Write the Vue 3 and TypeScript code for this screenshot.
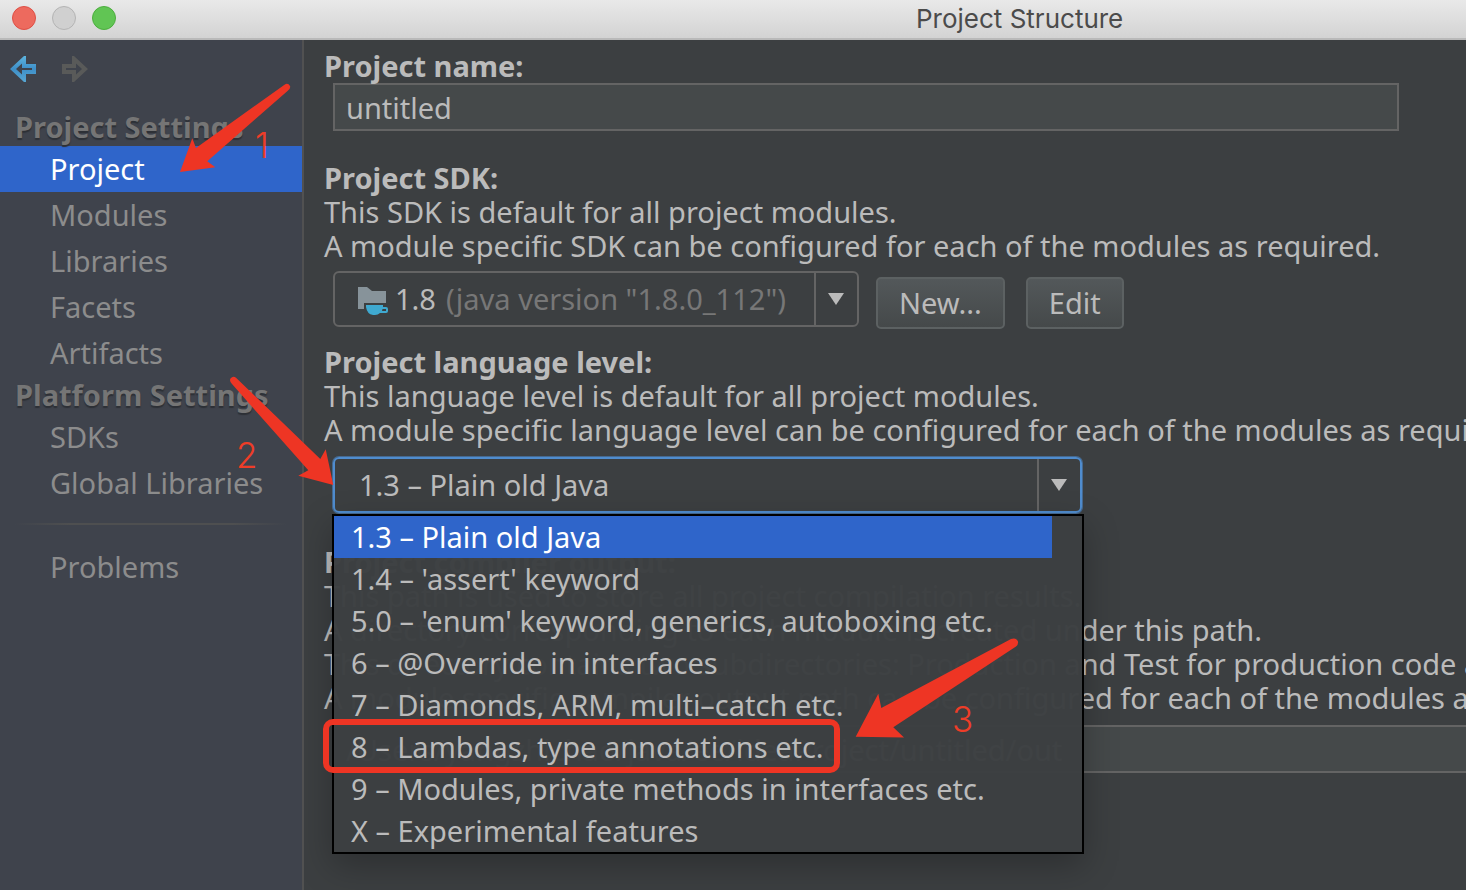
<script setup lang="ts">
import { ref } from 'vue'

interface NavGroup {
  title: string
  items: string[]
}

const groups: NavGroup[] = [
  { title: 'Project Settings', items: ['Project', 'Modules', 'Libraries', 'Facets', 'Artifacts'] },
  { title: 'Platform Settings', items: ['SDKs', 'Global Libraries'] },
]

const levels: string[] = [
  '1.3 – Plain old Java',
  "1.4 – 'assert' keyword",
  "5.0 – 'enum' keyword, generics, autoboxing etc.",
  '6 – @Override in interfaces',
  '7 – Diamonds, ARM, multi–catch etc.',
  '8 – Lambdas, type annotations etc.',
  '9 – Modules, private methods in interfaces etc.',
  'X – Experimental features',
]

const page = ref('Project')
const projectName = ref('untitled')
const sdk = ref('1.8')
const level = ref(levels[0])
const outputPath = ref('/Users/yangzhichao/java/ee/ideaProject/untitled/out')
</script>

<template>
  <div class="window">
    <header class="titlebar">
      <div class="lights">
        <button class="light close" type="button" aria-label="Close"></button>
        <button class="light minimize" type="button" aria-label="Minimize"></button>
        <button class="light zoom" type="button" aria-label="Zoom"></button>
      </div>
      <h1 class="title">Project Structure</h1>
    </header>

    <div class="body">
      <aside class="sidebar">
        <div class="history">
          <button class="history-button" type="button" aria-label="Back">
            <svg width="26" height="26" viewBox="0 0 26 26">
              <defs>
                <linearGradient id="back-fill" x1="0" y1="0" x2="0" y2="1">
                  <stop offset="0" stop-color="#5db4de" />
                  <stop offset="0.5" stop-color="#3e8fc8" />
                  <stop offset="1" stop-color="#57a6d2" />
                </linearGradient>
              </defs>
              <path
                fill="url(#back-fill)"
                fill-rule="evenodd"
                d="M0 13 L14 0 H16 V8 H26 V18 H16 V26 H14 Z M6 13 L12 7.5 V12 H22 V14 H12 V18.5 Z"
              />
            </svg>
          </button>
          <button class="history-button" type="button" aria-label="Forward">
            <svg width="26" height="26" viewBox="0 0 26 26">
              <path
                fill="#595a59"
                fill-rule="evenodd"
                d="M26 13 L12 0 H10 V8 H0 V18 H10 V26 H12 Z M20 13 L14 7.5 V12 H4 V14 H14 V18.5 Z"
              />
            </svg>
          </button>
        </div>

        <nav>
          <section v-for="group in groups" :key="group.title">
            <h2 class="group-title">{{ group.title }}</h2>
            <a
              v-for="item in group.items"
              :key="item"
              href="#"
              class="nav-item"
              :class="{ selected: item === page }"
              @click.prevent="page = item"
            >{{ item }}</a>
          </section>
          <hr class="separator" />
          <a href="#" class="nav-item" @click.prevent="page = 'Problems'">Problems</a>
        </nav>
      </aside>

      <main class="content">
        <section class="block">
          <label class="heading" for="project-name">Project name:</label>
          <input id="project-name" v-model="projectName" class="field name-field" type="text" />
        </section>

        <section class="block sdk-block">
          <label class="heading" for="sdk">Project SDK:</label>
          <p>This SDK is default for all project modules.</p>
          <p>A module specific SDK can be configured for each of the modules as required.</p>
          <div class="sdk-row">
            <div class="combo sdk-combo">
              <svg class="sdk-icon" width="32" height="30" viewBox="0 0 32 30">
                <path fill="#87939a" d="M0 1 H9 L14 5 H28 V17 H6 V23 H0 Z" />
                <path
                  fill="#3fa9d0"
                  d="M8 19 H25 V21 H28 Q30 21 30 23 V25 Q30 27 28 27 H22 Q20 29 17 29 H15 Q9 28 8 21 Z M24.500 23 L24 25 H28 V23 Z"
                  fill-rule="evenodd"
                />
              </svg>
              <select id="sdk" v-model="sdk" class="sdk-select">
                <option>1.8</option>
              </select>
              <span class="sdk-version">(java version "1.8.0_112")</span>
              <span class="combo-arrow">
                <svg width="16" height="12" viewBox="0 0 16 12"><path fill="#bbbbbb" d="M0 0 H16 L8 12 Z" /></svg>
              </span>
            </div>
            <button class="push" type="button">New...</button>
            <button class="push edit" type="button">Edit</button>
          </div>
        </section>

        <section class="block level-block">
          <label class="heading" for="level">Project language level:</label>
          <p>This language level is default for all project modules.</p>
          <p>A module specific language level can be configured for each of the modules as required.</p>
          <div class="combo level-combo">
            <select id="level" v-model="level" class="level-select">
              <option v-for="item in levels" :key="item">{{ item }}</option>
            </select>
            <span class="combo-arrow">
              <svg width="16" height="12" viewBox="0 0 16 12"><path fill="#bbbbbb" d="M0 0 H16 L8 12 Z" /></svg>
            </span>
            <ul class="popup" role="listbox" aria-label="Project language level">
              <li
                v-for="item in levels"
                :key="item"
                role="option"
                class="popup-item"
                :class="{ active: item === level }"
                :aria-selected="item === level"
                @click="level = item"
              >{{ item }}</li>
            </ul>
          </div>
        </section>

        <section class="block output-block">
          <label class="heading" for="output">Project compiler output:</label>
          <p>This path is used to store all project compilation results.</p>
          <p>A directory corresponding to each module is created under this path.</p>
          <p>This directory contains two subdirectories: Production and Test for production code and test sources, respectively.</p>
          <p>A module specific compiler output path can be configured for each of the modules as required.</p>
          <input id="output" v-model="outputPath" class="field output-field" type="text" />
        </section>
      </main>
    </div>

    <svg class="annotations" width="1466" height="890" viewBox="0 0 1466 890" aria-hidden="true">
      <g fill="#ee3524">
        <path d="M180 172 L192.300 138.300 L196 148 L284.500 84.700 Q288 82.500 290 86 Q291 88.500 287.500 91 L207.300 161.300 L215.300 167.300 Z" />
        <path d="M333.300 485 L325.700 449.300 L320.300 459 L236 377.700 Q233 375.500 230.500 378.500 Q229 381 232 384 L308.300 470.300 L298.300 475.700 Z" />
        <path d="M855.700 736.700 L878.300 693.700 L881.300 708 L1011 639 Q1016 637 1018 641.500 Q1018.500 644.500 1016 646.500 L893.300 727.300 L904 737.500 Z" />
      </g>
      <rect x="326" y="722" width="511" height="48" rx="7" fill="none" stroke="#ee3524" stroke-width="6" />
      <g class="step">
        <text x="255" y="158">1</text>
        <text x="236" y="468">2</text>
        <text x="952" y="732">3</text>
      </g>
    </svg>
  </div>
</template>

<style>
body {
  margin: 0;
  background: #3c3f41;
}
</style>

<style scoped>
.window {
  position: relative;
  display: flex;
  flex-direction: column;
  min-height: 100vh;
  overflow: hidden;
  color: #bbbbbb;
  font: 29px/34px "Noto Sans", "Open Sans", sans-serif;
}

.titlebar {
  display: flex;
  align-items: center;
  box-sizing: border-box;
  height: 40px;
  padding: 0 12px;
  border-bottom: 2px solid #b9b9b9;
  background: linear-gradient(#e9e9e9, #d3d3d3);
}

.lights {
  display: flex;
  gap: 16px;
  padding-bottom: 2px;
}

.light {
  box-sizing: border-box;
  width: 24px;
  height: 24px;
  padding: 0;
  border: 1px solid #de4f45;
  border-radius: 50%;
  background: #ed6a5e;
}

.minimize {
  border-color: #b4b4b4;
  background: #d0d0d0;
}

.zoom {
  border-color: #4cae3e;
  background: #61c554;
}

.title {
  margin: 0 0 0 800px;
  color: #4b4b4b;
  font: 400 26px/34px Inter, sans-serif;
  white-space: nowrap;
}

.body {
  display: flex;
  flex: 1;
}

.sidebar {
  flex: none;
  width: 302px;
  border-right: 2px solid #515151;
  background: #3f434c;
}

.history {
  display: flex;
  gap: 26px;
  box-sizing: border-box;
  height: 68px;
  padding: 16px 10px;
}

.history-button {
  width: 26px;
  height: 26px;
  padding: 0;
  border: 0;
  background: none;
}

.history-button svg {
  display: block;
}

.group-title {
  margin: 0;
  padding-left: 15px;
  color: #757575;
  font-size: 29px;
  font-weight: 700;
  line-height: 38px;
  text-shadow: 0 2px 1px #2d3036;
  white-space: nowrap;
}

.nav-item {
  display: block;
  padding-left: 50px;
  color: #8c8c8c;
  line-height: 46px;
  text-decoration: none;
}

.nav-item.selected {
  background: #2f65ca;
  color: #ffffff;
}

.separator {
  height: 2px;
  margin: 17px 15px 19px;
  border: 0;
  background: linear-gradient(90deg, transparent, #4e4f50 20%, #4e4f50 80%, transparent);
}

.content {
  flex: 1;
  min-width: 0;
  padding: 9px 0 0 20px;
  overflow: hidden;
  white-space: nowrap;
}

.heading {
  display: block;
  font-weight: 700;
}

p {
  margin: 0;
}

.sdk-block {
  margin-top: 30px;
}

.level-block {
  margin-top: 16px;
}

.output-block {
  margin-top: 32px;
}

.field {
  display: block;
  box-sizing: border-box;
  height: 48px;
  margin-left: 9px;
  padding: 0 11px;
  border: 2px solid #646464;
  background: #45494a;
  color: #bbbbbb;
  font: inherit;
  outline: 0;
}

.name-field {
  width: calc(100% - 76px);
}

.output-field {
  width: 100%;
  margin-top: 10px;
}

.sdk-row {
  display: flex;
  align-items: flex-end;
  margin: 8px 0 0 9px;
}

.combo {
  position: relative;
  display: flex;
  align-items: center;
  box-sizing: border-box;
  height: 56px;
  border: 2px solid #646464;
  border-radius: 6px;
}

.sdk-combo {
  width: 526px;
  margin-bottom: 2px;
}

.sdk-icon {
  flex: none;
  margin: 4px 5px 0 23px;
}

select {
  height: 100%;
  padding: 0;
  border: 0;
  background: none;
  color: #bbbbbb;
  font: inherit;
  appearance: none;
  outline: 0;
}

.sdk-select {
  flex: none;
}

.sdk-version {
  margin-left: 10px;
  color: #777777;
}

.combo-arrow {
  display: flex;
  align-items: center;
  justify-content: center;
  box-sizing: border-box;
  width: 43px;
  height: 100%;
  margin-left: auto;
  padding-right: 2px;
  border-left: 2px solid #646464;
  pointer-events: none;
}

.push {
  box-sizing: border-box;
  height: 52px;
  margin-left: 17px;
  padding: 0 21px;
  border: 2px solid #5c6162;
  border-radius: 5px;
  background: linear-gradient(#53585a, #45494a);
  color: #bbbbbb;
  font: inherit;
}

.edit {
  margin-left: 21px;
}

.level-combo {
  width: 749px;
  margin: 10px 0 0 9px;
  border: 2px solid #4f8cce;
  box-shadow: 0 0 0 1px #46698f;
}

.level-select {
  flex: 1;
  padding-left: 24px;
}

.popup {
  position: absolute;
  top: 55px;
  left: -3px;
  z-index: 1;
  box-sizing: border-box;
  width: 752px;
  margin: 0;
  padding: 0;
  border: 2px solid #000000;
  background: rgba(60, 63, 65, 0.98);
  box-shadow: 0 12px 32px rgba(0, 0, 0, 0.25);
  list-style: none;
}

.popup-item {
  margin-right: 30px;
  padding-left: 17px;
  line-height: 42px;
}

.popup-item.active {
  background: #2f65ca;
  color: #ffffff;
}

.annotations {
  position: absolute;
  top: 0;
  left: 0;
  z-index: 2;
  pointer-events: none;
}

.step {
  fill: #ee3d28;
  font: 300 35px Inter, sans-serif;
}
</style>
